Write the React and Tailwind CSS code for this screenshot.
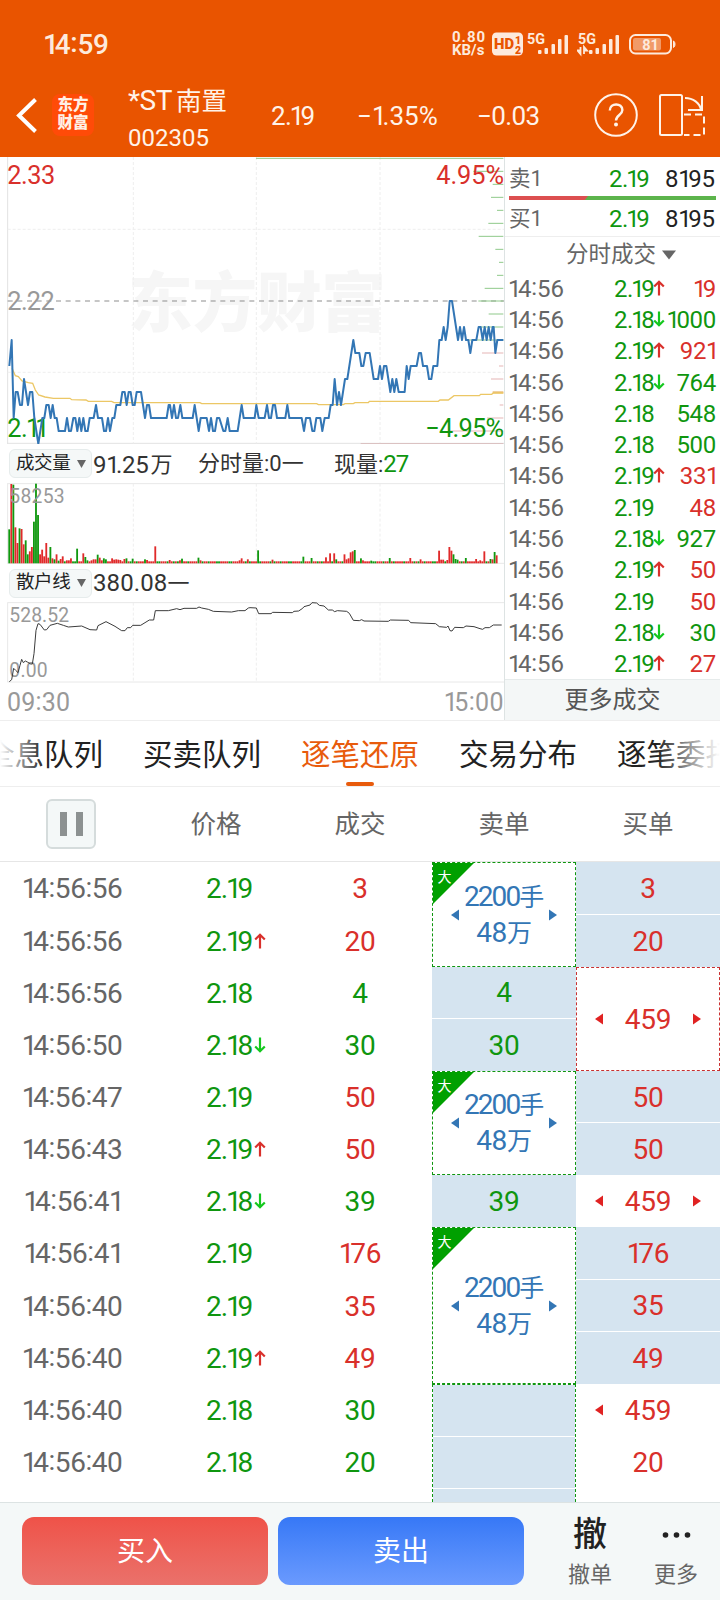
import React from "react";

const RED = "#d9302b";
const GREEN = "#0f960f";

// Chart coordinates are in thirds of a pixel, the afternoon series starts at 750
const PM = 750;

// x, price steps below the previous close
const priceAm = [
    28, 5, 35, 3, 41, 9, 47, 7, 53, 7, 60, 8, 66, 8, 72, 6, 84, 8, 90, 7, 97, 7, 103, 9, 115, 11, 127, 9, 133, 9,
    139, 8, 146, 8, 152, 9, 158, 8, 164, 9, 170, 9, 176, 10, 195, 10, 201, 9, 207, 10, 213, 10, 220, 9, 226, 9,
    232, 10, 238, 9, 244, 10, 250, 9, 256, 10, 263, 10, 269, 9, 281, 9, 288, 8, 294, 9, 306, 9, 312, 10, 318, 10,
    324, 9, 330, 10, 337, 9, 343, 9, 349, 8, 361, 8, 367, 7, 374, 7, 380, 8, 386, 7, 392, 7, 398, 8, 404, 8,
    410, 7, 423, 7, 435, 9, 441, 8, 447, 8, 453, 9, 500, 9, 506, 8, 510, 8, 516, 9, 522, 8, 528, 9, 534, 9,
    541, 8, 547, 9, 578, 9, 584, 8, 596, 10, 602, 9, 620, 9, 627, 10, 633, 9, 639, 10, 645, 10, 651, 9, 658, 9,
    670, 10, 676, 10, 683, 9, 689, 10, 713, 10, 719, 9, 725, 8, 731, 9,
];
const pricePm = [
    0, 9, 14, 9, 19, 8, 26, 9, 44, 9, 51, 8, 57, 9, 63, 9, 69, 8, 75, 8, 81, 9, 106, 9, 112, 8, 118, 9, 155, 9,
    162, 10, 168, 9, 180, 9, 187, 10, 193, 10, 199, 9, 211, 9, 217, 10, 224, 9, 236, 9, 242, 8, 248, 8, 254, 6,
    261, 8, 267, 7, 273, 8, 285, 6, 292, 6, 310, 3, 316, 4, 328, 4, 334, 5, 340, 5, 347, 4, 359, 4, 371, 6,
    384, 6, 390, 5, 396, 6, 402, 5, 409, 5, 421, 7, 427, 6, 433, 7, 439, 6, 446, 7, 464, 7, 470, 5, 476, 6,
    482, 5, 500, 5, 507, 4, 513, 4, 519, 5, 531, 5, 537, 6, 544, 6, 550, 5, 562, 5, 568, 3, 575, 3, 581, 2,
    587, 3, 593, 2, 599, 0, 606, 0, 612, 1, 624, 3, 630, 2, 636, 3, 642, 2, 648, 3, 655, 3, 661, 4, 667, 3,
    679, 3, 686, 2, 692, 2, 698, 3, 704, 2, 710, 3, 716, 2, 722, 3, 728, 2, 731, 2, 736, 4, 742, 3, 760, 3,
];
const avgAm = [
    36, 640, 46, 662, 55, 665, 66, 678, 85, 683, 98, 685, 106, 705, 116, 720, 135, 726, 160, 730, 210, 730, 215, 734,
    258, 735, 265, 739, 335, 739, 342, 743, 600, 743, 605, 746,
];
const avgPm = [
    0, 746, 200, 746, 205, 749, 280, 749, 285, 746, 310, 746, 315, 743, 355, 743, 358, 739, 565, 739, 570, 735,
    595, 735, 612, 722, 688, 722, 692, 718, 725, 718, 730, 714, 760, 714,
];
const retailAm = [
    28, 724, 35, 718, 41, 684, 47, 690, 54, 697, 60, 675, 65, 657, 70, 667, 76, 662, 82, 665, 92, 671, 97, 671,
    102, 640, 108, 570, 114, 550, 120, 552, 133, 569, 140, 568, 150, 555, 172, 549, 190, 555, 205, 560, 245, 557,
    270, 568, 290, 569, 294, 556, 318, 544, 345, 558, 365, 571, 375, 571, 382, 562, 392, 562, 398, 555, 422, 555,
    448, 539, 461, 539, 466, 511, 505, 511, 530, 505, 540, 508, 552, 504, 590, 504, 597, 500, 605, 503, 625, 507,
    640, 513, 695, 515, 715, 511, 735, 511, 745, 503,
];
const retailPm = [
    0, 502, 19, 503, 26, 520, 63, 520, 68, 516, 127, 517, 132, 513, 146, 512, 158, 504, 162, 499, 180, 494, 186, 487,
    200, 488, 208, 495, 222, 497, 235, 509, 247, 509, 254, 514, 262, 511, 290, 513, 298, 519, 310, 540, 328, 541,
    335, 538, 342, 542, 415, 543, 421, 539, 476, 540, 482, 547, 557, 550, 568, 559, 590, 561, 594, 557, 600, 571,
    606, 572, 614, 561, 640, 562, 648, 557, 672, 559, 690, 565, 698, 567, 705, 562, 718, 562, 730, 554, 755, 554,
];

const toPoints = (am, pm, y) => {
    const out = [];
    for (let i = 0; i < am.length; i += 2) out.push(`${am[i]},${y(am[i + 1])}`);
    for (let i = 0; i < pm.length; i += 2) out.push(`${pm[i] + PM},${y(pm[i + 1])}`);
    return out.join(" ");
};

// start x, y, colour of the pending order ticks at the right edge
const depth = [
    [18, 10, "#8fc98a"], [670, 49, "#8fc98a"], [728, 88, "#8fc98a"], [723, 127, "#8fc98a"], [741, 166, "#8fc98a"],
    [715, 205, "#8fc98a"], [686, 244, "#8fc98a"], [736, 283, "#8fc98a"], [747, 322, "#8fc98a"], [741, 361, "#8fc98a"],
    [704, 400, "#8fc98a"], [685, 438, "#8fc98a"], [716, 477, "#8fc98a"], [686, 516, "#8fc98a"], [655, 555, "#8fc98a"],
    [696, 594, "#e5b5b5"], [747, 633, "#e5b5b5"], [723, 672, "#e5b5b5"], [728, 712, "#e9b872"], [749, 750, "#e5b5b5"],
    [711, 789, "#e5b5b5"], [600, 828, "#e5b5b5"], [332, 866, "#d9bcbc"],
];

// minute index: [height, colour]
const bigVolumes = {
    0: [102, "g"], 1: [238, "r"], 2: [236, "g"], 3: [108, "r"], 4: [61, "r"], 5: [105, "g"], 6: [103, "r"],
    7: [57, "r"], 8: [69, "g"], 9: [27, "g"], 10: [36, "r"], 11: [49, "r"], 12: [125, "g"], 13: [239, "g"],
    14: [145, "g"], 15: [27, "r"], 16: [41, "r"], 17: [21, "r"], 18: [61, "r"], 19: [17, "r"], 20: [49, "g"],
    21: [15, "r"], 22: [12, "g"], 23: [27, "r"], 24: [8, "g"], 25: [13, "r"], 26: [21, "r"], 28: [9, "r"],
    29: [9, "r"], 30: [15, "r"], 33: [44, "g"], 36: [30, "r"], 37: [19, "g"], 38: [9, "g"], 40: [9, "r"],
    41: [12, "r"], 42: [12, "r"], 43: [26, "g"], 44: [17, "r"], 45: [9, "r"], 46: [15, "g"], 47: [12, "g"],
    50: [15, "r"], 51: [11, "r"], 52: [12, "r"], 53: [11, "r"], 54: [10, "r"], 56: [13, "r"], 57: [15, "g"],
    60: [14, "g"], 66: [12, "g"], 67: [10, "r"], 71: [51, "r"], 78: [10, "r"], 83: [9, "r"], 84: [14, "g"],
    92: [17, "g"], 93: [9, "r"], 112: [9, "r"], 113: [15, "r"], 116: [12, "r"], 121: [39, "g"], 128: [11, "r"],
    143: [20, "g"], 147: [16, "g"], 154: [18, "r"], 156: [30, "r"], 158: [30, "r"], 159: [12, "g"], 163: [27, "r"],
    164: [12, "r"], 165: [15, "r"], 166: [33, "r"], 167: [36, "r"], 168: [40, "g"], 171: [15, "g"], 172: [9, "r"],
    176: [8, "g"], 185: [16, "g"], 195: [16, "r"], 200: [12, "r"], 209: [38, "r"], 210: [11, "r"], 211: [11, "r"],
    213: [10, "r"], 214: [49, "r"], 215: [38, "r"], 216: [27, "g"], 217: [13, "g"], 218: [11, "g"], 222: [16, "g"],
    227: [13, "r"], 229: [9, "r"], 231: [36, "r"], 234: [13, "g"], 235: [12, "r"], 236: [34, "g"], 237: [24, "r"],
};

const deals = [
    ["2.19", "up", "19", "r"],
    ["2.18", "down", "1000", "g"],
    ["2.19", "up", "921", "r"],
    ["2.18", "down", "764", "g"],
    ["2.18", "", "548", "g"],
    ["2.18", "", "500", "g"],
    ["2.19", "up", "331", "r"],
    ["2.19", "", "48", "r"],
    ["2.18", "down", "927", "g"],
    ["2.19", "up", "50", "r"],
    ["2.19", "", "50", "r"],
    ["2.18", "down", "30", "g"],
    ["2.19", "up", "27", "r"],
];

const ticks = [
    ["14:56:56", "2.19", "", "3", "r"],
    ["14:56:56", "2.19", "up", "20", "r"],
    ["14:56:56", "2.18", "", "4", "g"],
    ["14:56:50", "2.18", "down", "30", "g"],
    ["14:56:47", "2.19", "", "50", "r"],
    ["14:56:43", "2.19", "up", "50", "r"],
    ["14:56:41", "2.18", "down", "39", "g"],
    ["14:56:41", "2.19", "", "176", "r"],
    ["14:56:40", "2.19", "", "35", "r"],
    ["14:56:40", "2.19", "up", "49", "r"],
    ["14:56:40", "2.18", "", "30", "g"],
    ["14:56:40", "2.18", "", "20", "g"],
];

const tone = { r: "text-[#d9302b]", g: "text-[#0f960f]" };

// Proportional figures: the tabular "1" leaves too much room after itself
const Num = ({ children }) => (
    <span className="relative top-px whitespace-nowrap">
        {String(children)
            .split(/(\.(?=1)|[1:])/)
            .filter(Boolean)
            .map((part, idx) => {
                if (part === "1") return <span key={idx} className="tracking-[-0.15em]">1</span>;
                if (part === ".") return <span key={idx} className="tracking-[-0.08em]">.</span>;
                if (part === ":") return <span key={idx} className="relative -top-[0.07em]">:</span>;
                return <React.Fragment key={idx}>{part}</React.Fragment>;
            })}
    </span>
);

const Arrow = ({ dir }) => (
    <svg
        width="12"
        height="16"
        viewBox="0 0 12 16"
        fill="none"
        stroke={dir === "up" ? RED : "#14c81e"}
        strokeWidth="2.2"
        className={dir === "down" ? "shrink-0 rotate-180" : "shrink-0"}
    >
        {dir && <path d="M6 15.5V2M1.2 6.5L6 1.7L10.8 6.5" />}
    </svg>
);

const Triangle = ({ dir, color }) => (
    <svg width="8" height="12" viewBox="0 0 8 12" fill={color} className="shrink-0">
        <path d={dir === "left" ? "M8 0.5V11.5L0 6Z" : "M0 0.5V11.5L8 6Z"} />
    </svg>
);

const Signal = ({ data }) => (
    <svg width="44" height="30" viewBox="0 -5 44 30" fill="#fdeadc" className="mb-[5px]">
        <text x="1" y="12" fontSize="14.500" fontWeight="700" textLength="18" lengthAdjust="spacingAndGlyphs">
            5G
        </text>
        <rect x="12" y="18" width="3.5" height="4" rx="1" />
        <rect x="18.500" y="16" width="3.5" height="6" rx="1" />
        <rect x="25.500" y="12" width="3.5" height="10" rx="1" />
        <rect x="32" y="7" width="3.5" height="15" rx="1" />
        <rect x="38.500" y="3" width="3.5" height="19" rx="1" />
        {data && (
            <path d="M3.500 15v7L0.500 18.500h3M7 22v-7L10 18.500h-3" fill="none" stroke="#fdeadc" strokeWidth="1.8" />
        )}
    </svg>
);

const Header = () => (
    <header className="h-[157px] bg-[#e95400] text-[#fff3e9]">
        <div className="h-[88px] flex items-center justify-between pl-[43px] pr-[43px] text-[#fdeadc]">
            <span className="text-[28px] font-medium leading-8 tracking-[-0.3px]">
                <Num>14:59</Num>
            </span>
            <div className="flex items-center">
                <div className="w-[40px] text-[15px] font-bold leading-[13px]">
                    <div className="tracking-[1px]">0.80</div>
                    <div>KB/s</div>
                </div>
                <svg width="31" height="24" viewBox="0 0 31 24" className="mr-[3px]">
                    <rect y="0.500" width="31" height="23" rx="4.500" fill="#fdeadc" />
                    <g fill="#e95400" fontWeight="900">
                        <text x="2" y="17" fontSize="15" textLength="20" lengthAdjust="spacingAndGlyphs">HD</text>
                        <text x="23" y="11.500" fontSize="10.500">1</text>
                        <text x="23" y="21.500" fontSize="10.500">2</text>
                    </g>
                </svg>
                <Signal />
                <div className="w-[7px]" />
                <Signal data />
                <svg width="48" height="21" viewBox="0 0 48 21" className="ml-2">
                    <rect x="1" y="1" width="41" height="18.500" rx="5.500" fill="none" stroke="#fdeadc" strokeWidth="2" />
                    <rect x="4" y="4" width="28" height="12.500" rx="2" fill="#f19a68" />
                    <path d="M44.500 7v6.500c2-0.800 2-5.700 0-6.500z" fill="#fdeadc" stroke="#fdeadc" />
                    <text x="21.500" y="15.500" fontSize="14.500" fontWeight="700" fill="#fdeadc" textAnchor="middle">81</text>
                </svg>
            </div>
        </div>
        <div className="h-[54px] flex items-center text-[26px]">
            <svg width="36" height="36" viewBox="0 0 36 36" fill="none" stroke="#fff" strokeWidth="4" className="ml-[2px]">
                <path d="M33.500 2.500L17 18.500L33.500 34.500" />
            </svg>
            <div className="ml-[14px] h-[42px] w-[42px] rounded-lg bg-[#ff4b08] pt-[2px] text-center text-[15.500px] font-black leading-[18px] text-[#fff0e6]">
                <div>东方</div>
                <div>财富</div>
            </div>
            <div className="ml-[34px] w-[143px] pt-[7px]">
                <div className="text-[25.500px] leading-[37px] whitespace-nowrap">
                    <span className="text-[28px] tracking-[-0.5px]">*ST</span>
                    <span className="ml-1">南置</span>
                </div>
                <div className="text-[24px] leading-[36px]">002305</div>
            </div>
            <span className="w-[86px] tracking-[-0.6px]"><Num>2.19</Num></span>
            <span className="w-[120px]"><Num>−1.35%</Num></span>
            <span className="w-[117px] tracking-[-0.6px]"><Num>−0.03</Num></span>
            <svg width="44" height="44" viewBox="0 0 44 44" fill="none" stroke="#fff3e9" strokeWidth="2">
                <circle cx="22" cy="22" r="20.800" />
                <path d="M15.800 17.500c0-8 12.600-8 12.600-0.500c0 5-6.400 5-6.400 10.500" strokeWidth="2.400" />
                <circle cx="22" cy="31.500" r="1" />
            </svg>
            <svg width="48" height="44" viewBox="0 0 48 44" fill="none" stroke="#fff3e9" strokeWidth="2" className="ml-5">
                <rect x="2" y="2" width="22" height="40" rx="1.500" />
                <path d="M27 5c8 0 15 5 16 12M44 3v14H30" />
                <path d="M26 21.500h20V42H26" strokeDasharray="7 4" />
            </svg>
        </div>
    </header>
);

const PriceChart = () => (
    <svg width="504" height="287" viewBox="0 6 1512 861" className="block">
        <text x="384" y="512" fontSize="194" fontWeight="900" fill="#f6f6f6" textLength="774">
            东方财富
        </text>
        <g stroke="#eeeeee" strokeWidth="3">
            <path d="M23 6V867M22 865H1512" stroke="#e2e2e2" />
            <path d="M400 6V865M769 6V865M1140 6V865M23 223H1512M23 652H1512" strokeDasharray="9 6" />
        </g>
        <path d="M23 438H1512" stroke="#8d8d8d" strokeWidth="3" strokeDasharray="15 14" />
        {depth.map(([x, y, color], idx) => (
            <path key={idx} d={`M${x + PM} ${y}H1510`} stroke={color} strokeWidth={color === "#e9b872" ? 6 : 3} />
        ))}
        <g fontSize="76">
            <text x="22" y="87" fill={RED} textLength="144">2.33</text>
            <text x="22" y="466" fill="#999" textLength="142">2.22</text>
            <text x="22 63 78 106" y="846" fill={GREEN}>2.11</text>
            <text x="1309" y="87" fill={RED} textLength="203">4.95%</text>
            <text x="1276" y="846" fill={GREEN} textLength="236">−4.95%</text>
        </g>
        <polyline points={toPoints(avgAm, avgPm, (v) => v)} fill="none" stroke="#ecc765" strokeWidth="4" />
        <polyline
            points={toPoints(priceAm, pricePm, (v) => 438 + v * 39)}
            fill="none"
            stroke="#3376b5"
            strokeWidth="6"
            strokeLinejoin="round"
        />
    </svg>
);

const VolumeChart = () => (
    <svg width="504" height="81" viewBox="0 128 1512 243" className="block">
        <path d="M23 129V369M22 130H1512M22 369H1512" stroke="#e8e8e8" strokeWidth="3" />
        <path d="M400 130V369M769 130V369M1140 130V369" stroke="#eeeeee" strokeWidth="3" strokeDasharray="9 6" />
        {Array.from({ length: 238 }, (_, i) => {
            const [h, c] = bigVolumes[i] || [6, i % 5 === 2 || i % 7 === 3 ? "g" : "r"];
            return <rect key={i} x={25 + i * 6.17} y={369 - h} width="5.500" height={h} fill={c === "r" ? "#e02a2a" : "#10980f"} />;
        })}
        <text x="28" y="189" fontSize="58" fill="#999" textLength="166">58253</text>
    </svg>
);

const RetailChart = () => (
    <svg width="504" height="81" viewBox="0 485 1512 243" className="block">
        <path d="M23 487V725M22 487H1512M22 725H1512" stroke="#e8e8e8" strokeWidth="3" />
        <path d="M400 487V725M769 487V725M1140 487V725" stroke="#eeeeee" strokeWidth="3" strokeDasharray="9 6" />
        <g fontSize="58" fill="#999">
            <text x="28" y="546" textLength="179">528.52</text>
            <text x="28" y="710" textLength="115">0.00</text>
        </g>
        <polyline points={toPoints(retailAm, retailPm, (v) => v)} fill="none" stroke="#3c3c3c" strokeWidth="3" />
    </svg>
);

const Picker = ({ label }) => (
    <div className="flex h-[29px] w-[83px] items-center justify-between rounded-md border border-[#e6ecec] bg-[#f5f8f8] pl-1.5 pr-[5px] text-[18.500px] text-[#222]">
        <span className="whitespace-nowrap tracking-[-0.4px]">{label}</span>
        <svg width="9" height="8" viewBox="0 0 9 8" fill="#666">
            <path d="M0 0H9L4.500 8Z" />
        </svg>
    </div>
);

const Charts = () => (
    <div className="h-[563px] w-[504px] shrink-0 text-[22px] text-[#333]">
        <PriceChart />
        <div className="flex h-[39px] items-center pl-[9px] whitespace-nowrap">
            <Picker label="成交量" />
            <span className="ml-px w-[105px]">
                <span className="text-[24px] tracking-[-0.3px]"><Num>91.25</Num></span>
                <span className="ml-[2px]">万</span>
            </span>
            <span className="w-[136px]">分时量:0一</span>
            <span>
                现量:<span className="text-[24px] tracking-[-1px] text-[#0f960f]">27</span>
            </span>
        </div>
        <VolumeChart />
        <div className="flex h-[38px] items-center pl-[9px]">
            <Picker label="散户线" />
            <span className="ml-px">
                <span className="text-[24px] tracking-[0.1px]">380.08</span>一
            </span>
        </div>
        <RetailChart />
        <div className="flex h-[38px] items-center justify-between pl-[7px] text-[25px] text-[#999]">
            <span className="tracking-[0.2px]"><Num>09:30</Num></span>
            <span className="tracking-[0.4px]"><Num>15:00</Num></span>
        </div>
    </div>
);

const Quote = ({ side }) => (
    <div className="flex h-[36px] items-center pl-1 pr-[5px] text-[24px]">
        <span className="text-[21.500px] text-[#666]"><Num>{`${side}1`}</Num></span>
        <span className="ml-auto w-[56px] tracking-[-0.600px] text-[#0f960f]"><Num>2.19</Num></span>
        <span className="flex w-[50px] justify-end tracking-[-0.1px] text-[#222]"><Num>8195</Num></span>
    </div>
);

const Deals = () => (
    <div className="flex min-w-0 grow flex-col border-l border-[#dde3e3]">
        <div className="h-[80px] border-b border-[#eee] pt-[3px]">
            <Quote side="卖" />
            <div className="mx-1 flex h-1 bg-[#5cb44c]">
                <div className="w-[79px] bg-[#dc4f50] [clip-path:polygon(0_0,100%_0,96%_100%,0_100%)]" />
            </div>
            <Quote side="买" />
        </div>
        <div className="flex h-[35px] items-center justify-center gap-[6px] pl-[17px] pt-px text-[22.500px] text-[#666]">
            分时成交
            <svg width="14" height="10" viewBox="0 0 14 10" fill="#666">
                <path d="M0 0.500H14L7 9.500Z" />
            </svg>
        </div>
        {deals.map(([price, dir, amount, color], idx) => (
            <div key={idx} className="flex h-[31.300px] items-center pl-[3px] pr-1 text-[24px]">
                <span className="w-[106px] tracking-[-0.1px] text-[#666]"><Num>14:56</Num></span>
                <span className="w-[39px] tracking-[-0.6px] text-[#0f960f]"><Num>{price}</Num></span>
                <Arrow dir={dir} />
                <span className={`flex grow justify-end tracking-[-0.3px] ${tone[color]}`}><Num>{amount}</Num></span>
            </div>
        ))}
        <div className="flex grow items-center justify-center border-t border-[#e6ebeb] bg-[#f4f7f7] text-[24px] text-[#555]">
            更多成交
        </div>
    </div>
);

const Tabs = () => (
    <nav className="relative flex h-[67px] items-center gap-10 overflow-hidden border-y border-[#eeeeee] pt-[3px] text-[29.500px] whitespace-nowrap text-[#222]">
        <span className="-ml-[15px]">全息队列</span>
        <span>买卖队列</span>
        <span className="text-[#e85b0c]">逐笔还原</span>
        <span>交易分布</span>
        <span>逐笔委托</span>
        <div className="absolute bottom-0 left-[346px] h-1 w-7 rounded-full bg-[#e85b0c]" />
        <div className="absolute inset-y-0 left-0 w-11 bg-linear-to-r from-white to-transparent" />
        <div className="absolute inset-y-0 right-0 w-16 bg-linear-to-l from-white to-transparent" />
    </nav>
);

const BigSell = ({ size }) => (
    <div className={`relative flex shrink-0 items-center justify-center border border-dashed border-[#0f960f] ${size}`}>
        <svg width="41" height="41" viewBox="0 0 41 41" className="absolute left-0 top-0">
            <path d="M0 0H41L0 41Z" fill="#00a000" />
            <text x="4.500" y="18.500" fontSize="14" fill="#fff">大</text>
        </svg>
        <div className="flex w-[106px] items-center justify-between text-[#3376b5]">
            <Triangle dir="left" color="#3376b5" />
            <div className="text-center text-[25px] leading-[35px] whitespace-nowrap">
                <div>
                    <span className="text-[28px] tracking-[-1.900px]">2200</span>手
                </div>
                <div>
                    <span className="text-[28px] tracking-[-0.3px]">48</span>万
                </div>
            </div>
            <Triangle dir="right" color="#3376b5" />
        </div>
    </div>
);

const Fill = ({ children, color, last }) => (
    <div
        className={`flex h-[52.150px] shrink-0 items-center justify-center bg-[#d5e4f0] ${tone[color] || ""} ${
            last ? "" : "border-b border-white"
        }`}
    >
        {children && <Num>{children}</Num>}
    </div>
);

const BuyOrder = ({ size, right = true }) => (
    <div className={`flex shrink-0 items-center justify-center text-[#d9302b] ${size}`}>
        <div className="flex w-[106px] items-center justify-between">
            <Triangle dir="left" color="#e02222" />
            <Num>459</Num>
            {right ? <Triangle dir="right" color="#e02222" /> : <span className="w-2" />}
        </div>
    </div>
);

const TickTable = () => (
    <div className="flex h-[639.600px] overflow-hidden text-[28px] tracking-[-0.2px]">
        <div className="w-[432px] shrink-0">
            {ticks.map(([time, price, dir, amount, color], idx) => (
                <div key={idx} className="grid h-[52.150px] grid-cols-3 items-center">
                    <span className="text-center tracking-[-0.450px] text-[#666]"><Num>{time}</Num></span>
                    <span className="flex items-center pl-[62px] tracking-[-0.900px] text-[#0f960f]">
                        <span className="w-[48px]"><Num>{price}</Num></span>
                        <Arrow dir={dir} />
                    </span>
                    <span className={`text-center ${tone[color]}`}><Num>{amount}</Num></span>
                </div>
            ))}
        </div>
        <div className="flex w-36 shrink-0 flex-col">
            <BigSell size="h-[104.300px]" />
            <Fill color="g">4</Fill>
            <Fill color="g" last>30</Fill>
            <BigSell size="h-[104.300px]" />
            <Fill color="g" last>39</Fill>
            <BigSell size="h-[156.450px]" />
            <div className="shrink-0 border border-dashed border-[#0f960f]">
                <Fill />
                <Fill />
                <Fill />
            </div>
        </div>
        <div className="flex w-36 shrink-0 flex-col">
            <Fill color="r">3</Fill>
            <Fill color="r" last>20</Fill>
            <BuyOrder size="h-[104.300px] border border-dashed border-[#c93030]" />
            <Fill color="r">50</Fill>
            <Fill color="r" last>50</Fill>
            <BuyOrder size="h-[52.150px]" />
            <Fill color="r">176</Fill>
            <Fill color="r">35</Fill>
            <Fill color="r" last>49</Fill>
            <BuyOrder size="h-[52.150px]" right={false} />
            <div className="flex h-[52.150px] shrink-0 items-center justify-center text-[#d9302b]">
                <Num>20</Num>
            </div>
        </div>
    </div>
);

const App = () => {
    return (
        <div className="h-[1600px] w-[720px] overflow-hidden bg-white font-[Roboto,'Noto_Sans_CJK_SC',sans-serif]">
            <Header />
            <main>
                <div className="flex h-[563px]">
                    <Charts />
                    <Deals />
                </div>
                <Tabs />
                <div className="grid h-[75.400px] grid-cols-5 items-center border-b border-[#e6e6e6] text-center text-[25.500px] text-[#666]">
                    <div className="ml-[46px] flex h-[50px] w-[50px] items-center justify-center gap-[9px] rounded-md border-2 border-[#d5dcdc] bg-[#f4f8f8]">
                        <div className="h-6 w-[7px] bg-[#8c9191]" />
                        <div className="h-6 w-[7px] bg-[#8c9191]" />
                    </div>
                    <span>价格</span>
                    <span>成交</span>
                    <span>卖单</span>
                    <span>买单</span>
                </div>
                <TickTable />
            </main>
            <footer className="flex h-[98px] border-t border-[#dce3e3] bg-[#f4f8f8] pl-[22px] pt-[14.500px] text-[28px] text-white">
                <button className="h-[68px] w-[246px] rounded-xl bg-linear-to-b from-[#ef5248] to-[#ea716b] pt-[2px]">买入</button>
                <button className="ml-[10px] h-[68px] w-[246px] rounded-xl bg-linear-to-b from-[#3678f6] to-[#6a9afe] pt-[2px]">卖出</button>
                <div className="ml-[33px] w-[66px] text-center text-[#222]">
                    <div className="text-[34px] font-medium leading-[35px]">撤</div>
                    <div className="text-[22px] leading-[46px] text-[#666]">撤单</div>
                </div>
                <div className="ml-[20px] w-[66px] text-center text-[#222]">
                    <svg width="66" height="35" viewBox="0 0 66 35" fill="#222" className="block">
                        <circle cx="22.500" cy="18" r="2.800" />
                        <circle cx="33.500" cy="18" r="2.800" />
                        <circle cx="44.500" cy="18" r="2.800" />
                    </svg>
                    <div className="text-[22px] leading-[46px] text-[#666]">更多</div>
                </div>
            </footer>
        </div>
    );
};

export default App;
